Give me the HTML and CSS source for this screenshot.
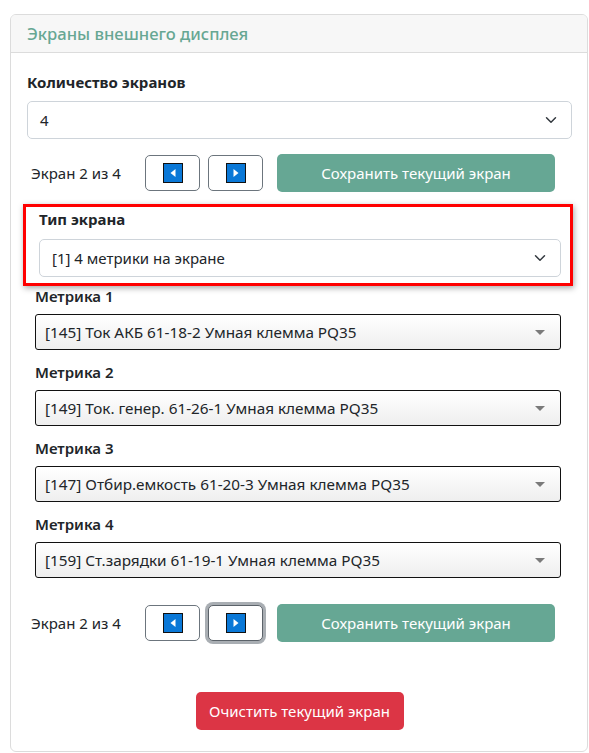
FILE: index.html
```html
<!DOCTYPE html>
<html lang="ru">
<head>
<meta charset="utf-8">
<link rel="stylesheet" href="styles.css">
</head>
<body>
<div class="card">
  <div class="card-header">Экраны внешнего дисплея</div>
  <div class="card-body">
    <div class="field-label">Количество экранов</div>
    <div class="form-select">
      <span>4</span>
      <svg class="chev" width="12" height="12" viewBox="0 0 16 16"><path d="M2 5l6 6 6-6" fill="none" stroke="#343a40" stroke-width="2" stroke-linecap="round" stroke-linejoin="round"/></svg>
    </div>

    <div class="nav-row">
      <span class="nav-text">Экран 2 из 4</span>
      <button class="btn-arrow"><span class="arrow-icon"><svg width="10" height="10" viewBox="0 0 10 10"><path d="M7.5 1L2.5 5 7.5 9z" fill="#fff"/></svg></span></button>
      <button class="btn-arrow"><span class="arrow-icon"><svg width="10" height="10" viewBox="0 0 10 10"><path d="M2.5 1L7.5 5 2.5 9z" fill="#fff"/></svg></span></button>
      <button class="btn-save">Сохранить текущий экран</button>
    </div>

    <div class="type-box">
      <div class="field-label">Тип экрана</div>
      <div class="form-select">
        <span>[1] 4 метрики на экране</span>
        <svg class="chev" width="12" height="12" viewBox="0 0 16 16"><path d="M2 5l6 6 6-6" fill="none" stroke="#343a40" stroke-width="2" stroke-linecap="round" stroke-linejoin="round"/></svg>
      </div>
    </div>

    <div class="metrics">
      <div class="metric">
        <div class="metric-label">Метрика 1</div>
        <div class="native-select"><span>[145] Ток АКБ 61-18-2 Умная клемма PQ35</span><span class="tri"></span></div>
      </div>
      <div class="metric">
        <div class="metric-label">Метрика 2</div>
        <div class="native-select"><span>[149] Ток. генер. 61-26-1 Умная клемма PQ35</span><span class="tri"></span></div>
      </div>
      <div class="metric">
        <div class="metric-label">Метрика 3</div>
        <div class="native-select"><span>[147] Отбир.емкость 61-20-3 Умная клемма PQ35</span><span class="tri"></span></div>
      </div>
      <div class="metric">
        <div class="metric-label">Метрика 4</div>
        <div class="native-select"><span>[159] Ст.зарядки 61-19-1 Умная клемма PQ35</span><span class="tri"></span></div>
      </div>
    </div>

    <div class="nav-row nav-row-bottom">
      <span class="nav-text">Экран 2 из 4</span>
      <button class="btn-arrow"><span class="arrow-icon"><svg width="10" height="10" viewBox="0 0 10 10"><path d="M7.5 1L2.5 5 7.5 9z" fill="#fff"/></svg></span></button>
      <button class="btn-arrow focused"><span class="arrow-icon"><svg width="10" height="10" viewBox="0 0 10 10"><path d="M2.5 1L7.5 5 2.5 9z" fill="#fff"/></svg></span></button>
      <button class="btn-save">Сохранить текущий экран</button>
    </div>

    <div class="clear-row">
      <button class="btn-clear">Очистить текущий экран</button>
    </div>
  </div>
</div>
</body>
</html>
```

FILE: styles.css
```css
* { box-sizing: border-box; }
html, body { margin: 0; padding: 0; background: #fff; }
body {
  padding: 14px 1px 0 10px;
  font-family: "Noto Sans", "Open Sans", sans-serif;
  font-size: 15px;
  color: #212529;
}
.card {
  border: 1px solid #dcdcdc;
  border-radius: 6px;
  height: 738px;
  overflow: hidden;
}
.card-header {
  height: 38px;
  background: #f7f7f7;
  border-bottom: 1px solid #dcdcdc;
  padding: 0 16px;
  display: flex;
  align-items: center;
  color: #67a793;
  font-size: 16.6px;
  font-weight: 500;
}
.card-body {
  padding: 19px 15px 0 16px;
}
.field-label {
  font-weight: 700;
  line-height: 20px;
  margin-bottom: 9px;
}
.form-select {
  height: 38px;
  border: 1px solid #ced4da;
  border-radius: 5px;
  display: flex;
  align-items: center;
  justify-content: space-between;
  padding: 0 14px 0 12px;
}
.nav-row {
  display: flex;
  align-items: center;
  height: 38px;
  margin-top: 15px;
}
.nav-text {
  margin-left: 4px;
  width: 114px;
}
.btn-arrow {
  width: 55px;
  height: 36px;
  border: 1px solid #6c757d;
  border-radius: 5px;
  background: #fff;
  display: flex;
  align-items: center;
  justify-content: center;
  padding: 0;
  margin-right: 8px;
}
.btn-arrow + .btn-save { margin-left: 6px; }
.btn-arrow.focused {
  border-color: #5c636a;
  box-shadow: 0 0 0 3px #a9aeb3;
}
.arrow-icon {
  width: 20px;
  height: 20px;
  background: #0a78d7;
  border: 1px solid #111;
  display: flex;
  align-items: center;
  justify-content: center;
}
.btn-save {
  width: 278px;
  height: 38px;
  border: none;
  border-radius: 5px;
  background: #66a794;
  color: #fff;
  font-family: inherit;
  font-size: 15px;
}
.type-box {
  margin: 12px -1px 0 -4px;
  border: 3px solid #f00;
  padding: 2px 9px 6px 13px;
  box-shadow: 1px 2px 6px rgba(0,0,0,0.35);
}
.type-box .field-label { margin-bottom: 10px; }
.metrics {
  padding: 0 11px 0 8px;
}
.metric-label {
  font-weight: 600;
  line-height: 20px;
  margin-bottom: 8px;
}
.metric + .metric { margin-top: 12px; }
.native-select {
  height: 36px;
  border: 1px solid #111;
  border-radius: 3px;
  background: linear-gradient(#ffffff, #eeeeee);
  display: flex;
  align-items: center;
  justify-content: space-between;
  padding: 0 15px 0 9px;
  font-size: 15.3px;
}
.tri {
  width: 0; height: 0;
  border-left: 5px solid transparent;
  border-right: 5px solid transparent;
  border-top: 5px solid #7a7a7a;
}
.nav-row-bottom { margin-top: 26px; }
.clear-row {
  display: flex;
  justify-content: center;
  margin-top: 50px;
}
.btn-clear {
  width: 208px;
  height: 38px;
  border: none;
  border-radius: 5px;
  background: #dc3545;
  color: #fff;
  font-family: inherit;
  font-size: 15px;
}
```
